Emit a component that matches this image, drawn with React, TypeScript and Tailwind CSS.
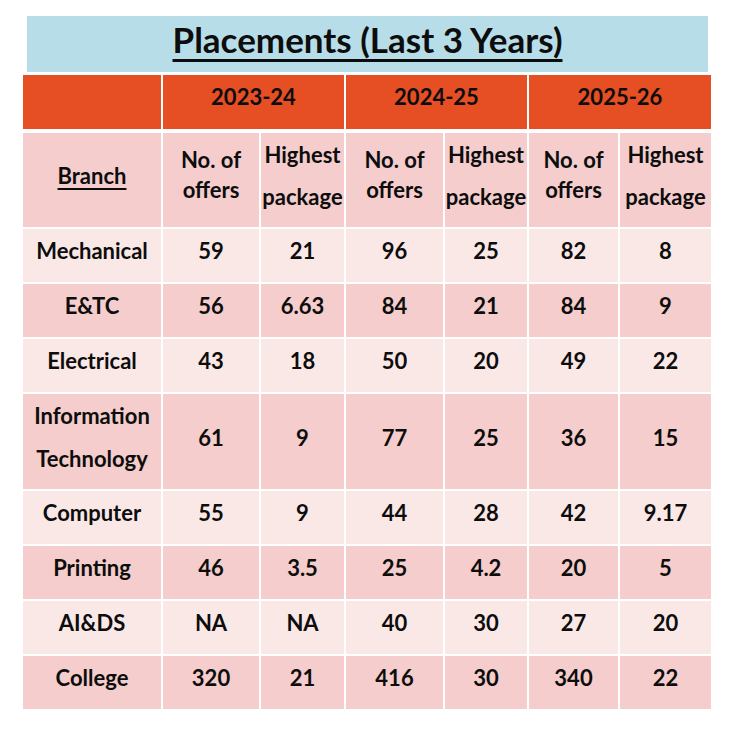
const cols = 'grid grid-cols-[138px_98px_85px_99px_84px_91px_93px]'

const rows = [
  { branch: 'Mechanical', v: ['59', '21', '96', '25', '82', '8'] },
  { branch: 'E&TC', v: ['56', '6.63', '84', '21', '84', '9'] },
  { branch: 'Electrical', v: ['43', '18', '50', '20', '49', '22'] },
  { branch: 'Information Technology', v: ['61', '9', '77', '25', '36', '15'], tall: true },
  { branch: 'Computer', v: ['55', '9', '44', '28', '42', '9.17'] },
  { branch: 'Printing', v: ['46', '3.5', '25', '4.2', '20', '5'] },
  { branch: 'AI&DS', v: ['NA', 'NA', '40', '30', '27', '20'] },
  { branch: 'College', v: ['320', '21', '416', '30', '340', '22'] }
]

function Offers() {
  return (
    <div className="flex flex-col items-center justify-center border-l-2 border-white pb-[10px] leading-[30px]">
      <span>No. of</span>
      <span>offers</span>
    </div>
  )
}

function Highest() {
  return (
    <div className="flex flex-col items-center justify-center border-l-2 border-white pb-[8px] leading-[42px]">
      <span>Highest</span>
      <span>package</span>
    </div>
  )
}

export default function App() {
  return (
    <div
      className="min-h-[737px] w-[729px] bg-white pl-[23px] pt-[16px] text-[#0d0d0d] font-bold"
      style={{ fontFamily: 'Lato, "Noto Sans", sans-serif' }}
    >
      {/* Title banner */}
      <div className="ml-[4px] flex h-[56px] w-[681px] items-center justify-center bg-[#b7dde8] pb-[10px]">
        <h1 className="text-[35px] leading-none underline decoration-[2.5px] underline-offset-[6px]">
          Placements (Last 3 Years)
        </h1>
      </div>

      <div className="mt-[3px] w-[688px] text-[22px]">
        {/* Years */}
        <div className="grid h-[54px] grid-cols-[138px_183px_183px_184px] bg-[#e64e23]">
          <div />
          <div className="flex items-center justify-center border-l-2 border-white pb-[11px]">2023-24</div>
          <div className="flex items-center justify-center border-l-2 border-white pb-[11px]">2024-25</div>
          <div className="flex items-center justify-center border-l-2 border-white pb-[11px]">2025-26</div>
        </div>

        {/* Column titles */}
        <div className={`${cols} mt-[4px] h-[94px] bg-[#f4cdcc]`}>
          <div className="flex items-center justify-center pb-[10px]">
            <span className="underline decoration-[2px] underline-offset-[4px]">Branch</span>
          </div>
          <Offers />
          <Highest />
          <Offers />
          <Highest />
          <Offers />
          <Highest />
        </div>

        {/* Data */}
        {rows.map((r, i) => (
          <div
            key={r.branch}
            className={`${cols} border-t-2 border-white ${r.tall ? 'h-[97px]' : 'h-[55px]'} ${
              i % 2 === 0 ? 'bg-[#fae8e7]' : 'bg-[#f4cdcc]'
            }`}
          >
            <div className="flex items-center justify-center pb-[15px] text-center leading-[43px]">
              {r.tall ? (
                <span>
                  Information
                  <br />
                  Technology
                </span>
              ) : (
                r.branch
              )}
            </div>
            {r.v.map((x, j) => (
              <div key={j} className="flex items-center justify-center border-l-2 border-white pb-[15px]">
                {x}
              </div>
            ))}
          </div>
        ))}
      </div>
    </div>
  )
}
